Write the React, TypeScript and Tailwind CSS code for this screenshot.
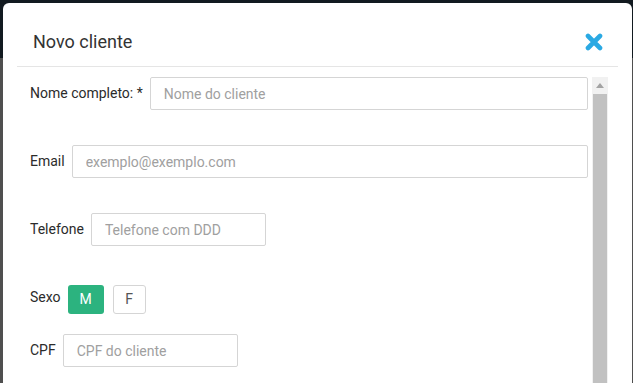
import React from "react";

const inputClass =
  "h-[33px] rounded-[2px] border border-[#d5d5d5] bg-white pl-[13px] text-[14px] text-[#333] placeholder:text-[#a0a0a0] outline-none";

const labelClass = "mr-[7px] text-[14px] font-normal text-[#2b2b2b] whitespace-nowrap";

const App = () => {
  return (
    <div
      className="h-[383px] w-[633px] overflow-hidden bg-[linear-gradient(to_bottom,#121a20_58px,#4f4f4f_58px)] pl-[3px] pt-[3px]"
      style={{ fontFamily: "Roboto, 'Noto Sans', sans-serif" }}
    >
      <div className="flex h-[420px] w-[629px] flex-col rounded-t-md bg-white px-[14px]">
        {/* Header */}
        <div className="flex items-center justify-between border-b border-[#e5e5e5] pb-[12px] pl-4 pr-[15px] pt-[27px]">
          <h2 className="text-[18px] font-normal leading-6 text-[#333]">
            Novo cliente
          </h2>
          <button className="flex h-[18px] w-[18px] items-center justify-center">
            <svg viewBox="0 0 18 18" className="h-[18px] w-[18px]">
              <path
                d="M3 3 L15 15 M15 3 L3 15"
                stroke="#2aa9e3"
                strokeWidth={4.6}
                strokeLinecap="round"
                fill="none"
              />
            </svg>
          </button>
        </div>

        {/* Body */}
        <div className="mt-[10px] flex flex-1 overflow-hidden pr-[10px]">
          <div className="flex-1 pl-[13px] pr-[4px]">
            {/* Nome completo */}
            <div className="mb-[35px] flex items-center">
              <label className={labelClass}>Nome completo: *</label>
              <input className={`${inputClass} flex-1`} placeholder="Nome do cliente" />
            </div>

            {/* Email */}
            <div className="mb-[35px] flex items-center">
              <label className={labelClass}>Email</label>
              <input className={`${inputClass} flex-1`} placeholder="exemplo@exemplo.com" />
            </div>

            {/* Telefone */}
            <div className="mb-[39px] flex items-center">
              <label className={labelClass}>Telefone</label>
              <input className={`${inputClass} w-[175px]`} placeholder="Telefone com DDD" />
            </div>

            {/* Sexo */}
            <div className="mb-[20px] flex items-start">
              <label className={`${labelClass} pt-[2px] leading-5`}>Sexo</label>
              <button className="h-[29px] w-[36px] rounded-[3px] bg-[#2cb37f] text-[14px] text-white">
                M
              </button>
              <button className="ml-[9px] h-[29px] w-[33px] rounded-[3px] border border-[#d5d5d5] bg-white text-[14px] text-[#555]">
                F
              </button>
            </div>

            {/* CPF */}
            <div className="flex items-center">
              <label className={labelClass}>CPF</label>
              <input className={`${inputClass} w-[175px]`} placeholder="CPF do cliente" />
            </div>
          </div>

          {/* Scrollbar */}
          <div className="flex w-4 flex-col bg-[#f1f1f1]">
            <div className="flex h-[17px] items-center justify-center">
              <svg viewBox="0 0 8 5" className="h-[5px] w-[8px]">
                <path d="M4 0 L8 5 L0 5 Z" fill="#a3a3a3" />
              </svg>
            </div>
            <div className="mx-px flex-1 bg-[#c1c1c1]" />
          </div>
        </div>
      </div>
    </div>
  );
};

export default App;
